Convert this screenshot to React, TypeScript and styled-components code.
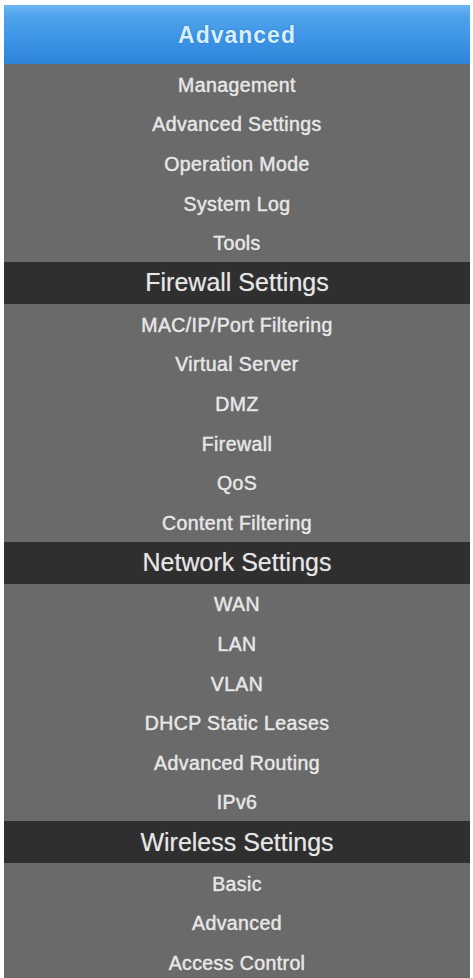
import React from "react";
import styled, { createGlobalStyle } from "styled-components";

const GlobalStyle = createGlobalStyle`
  html, body {
    margin: 0;
    padding: 0;
    background: #ffffff;
  }
  body {
    font-family: "Liberation Sans", Arial, sans-serif;
  }
`;

const Page = styled.div`
  padding: 5px 3px 0 4px;
`;

const Menu = styled.nav`
  display: flex;
  flex-direction: column;
  background: #6a6a6a;
`;

const Title = styled.div`
  height: 59px;
  display: flex;
  align-items: center;
  justify-content: center;
  background: linear-gradient(
    to bottom,
    #6cb6f4 0%,
    #4ea2ec 20%,
    #3d94e6 60%,
    #2d84d9 100%
  );
  color: #d6efff;
  font-size: 23px;
  font-weight: bold;
  letter-spacing: 1px;
  padding-top: 1px;
  box-sizing: border-box;
  text-shadow: 0 0 2px rgba(20, 70, 140, 0.5);
`;

const SectionHeader = styled.div`
  height: 42px;
  display: flex;
  align-items: center;
  justify-content: center;
  background: #2f2f2f;
  color: #e6e6e6;
  font-size: 25px;
  text-shadow: 0 0 1px rgba(255, 255, 255, 0.4);
`;

const Item = styled.a`
  height: 39.6px;
  box-sizing: border-box;
  padding-top: 3px;
  display: flex;
  align-items: center;
  justify-content: center;
  color: #e6e6e6;
  font-size: 19.5px;
  letter-spacing: 0.4px;
  text-decoration: none;
  -webkit-text-stroke: 0.3px #e6e6e6;
  text-shadow: 0 0 1px rgba(255, 255, 255, 0.55), 0 1px 1px rgba(0, 0, 0, 0.2);
  cursor: pointer;
`;

type Section = {
  title?: string;
  items: string[];
};

const sections: Section[] = [
  {
    items: [
      "Management",
      "Advanced Settings",
      "Operation Mode",
      "System Log",
      "Tools",
    ],
  },
  {
    title: "Firewall Settings",
    items: [
      "MAC/IP/Port Filtering",
      "Virtual Server",
      "DMZ",
      "Firewall",
      "QoS",
      "Content Filtering",
    ],
  },
  {
    title: "Network Settings",
    items: [
      "WAN",
      "LAN",
      "VLAN",
      "DHCP Static Leases",
      "Advanced Routing",
      "IPv6",
    ],
  },
  {
    title: "Wireless Settings",
    items: ["Basic", "Advanced", "Access Control"],
  },
];

const App = () => {
  return (
    <Page>
      <GlobalStyle />
      <Menu>
        <Title>Advanced</Title>
        {sections.map((section, i) => (
          <React.Fragment key={i}>
            {section.title && <SectionHeader>{section.title}</SectionHeader>}
            {section.items.map((item) => (
              <Item key={item}>{item}</Item>
            ))}
          </React.Fragment>
        ))}
      </Menu>
    </Page>
  );
};

export default App;
